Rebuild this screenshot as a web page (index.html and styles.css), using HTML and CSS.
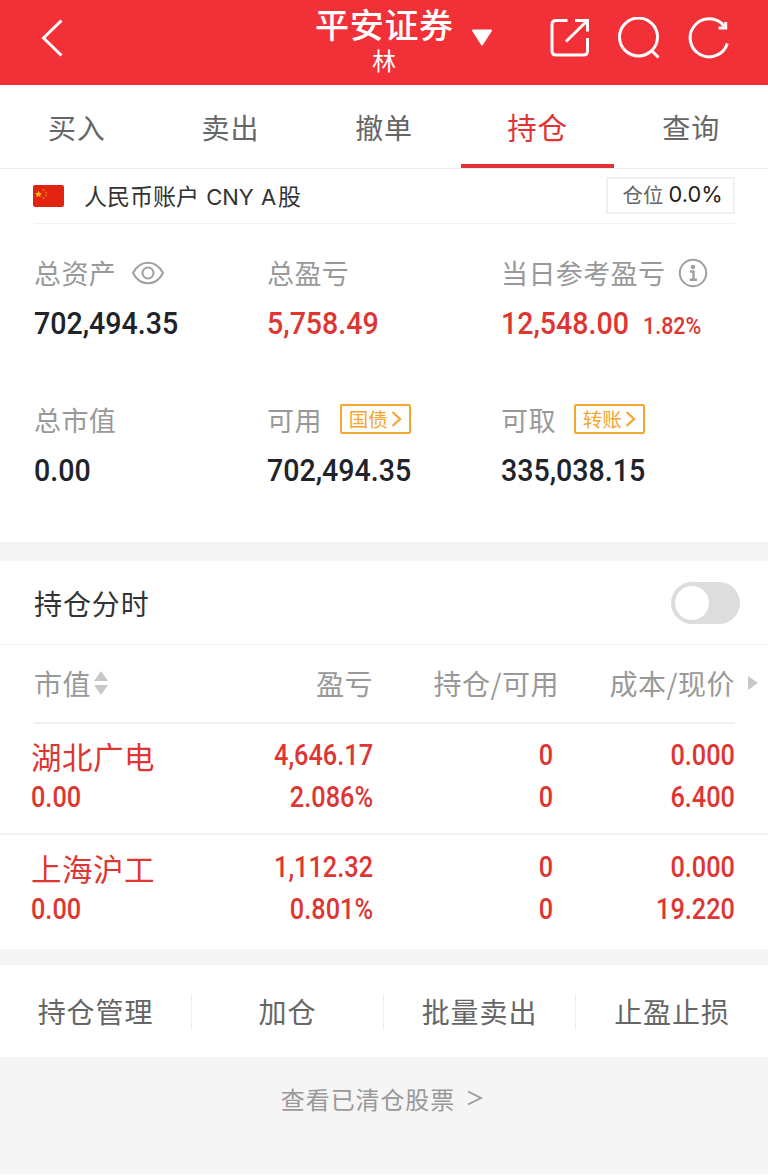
FILE: index.html
```html
<!DOCTYPE html>
<html lang="zh-CN">
<head>
<meta charset="utf-8">
<title>平安证券</title>
<link rel="stylesheet" href="styles.css">
</head>
<body>
<header class="header">
  <svg class="back" width="24" height="40" viewBox="0 0 24 40" fill="none" stroke="#fff" stroke-width="3"><path d="M20.500 2.500L2.500 20L20.500 37.500"/></svg>
  <div class="title-block">
    <h1 class="title">平安证券</h1>
    <div class="owner">林</div>
  </div>
  <svg class="caret" width="22" height="18" viewBox="0 0 22 18"><path d="M2 1.500H20L11 15.500Z" fill="#fff" stroke="#fff" stroke-width="2" stroke-linejoin="round"/></svg>
  <div class="tools">
    <svg width="42" height="42" viewBox="0 0 42 42" fill="none" stroke="#fff" stroke-width="3"><path d="M19.500 3.500H8Q4 3.500 4 7.500V34Q4 38 8 38H35.500Q39.500 38 39.500 34V21M27 3.500H39.500V14.500M39 4L18 24.500"/></svg>
    <svg width="46" height="42" viewBox="0 0 46 42" fill="none" stroke="#fff" stroke-width="3"><circle cx="21.500" cy="20" r="19"/><path d="M34 33L41.500 40.500"/></svg>
    <svg width="42" height="42" viewBox="0 0 42 42" fill="none" stroke="#fff" stroke-width="3"><path d="M39.300 26.500A19 19 0 1 1 36 9"/><path d="M37.700 5V11H30.500" stroke-width="3"/></svg>
  </div>
</header>

<nav class="tabs">
  <span class="tab">买入</span>
  <span class="tab">卖出</span>
  <span class="tab">撤单</span>
  <span class="tab tab-active">持仓</span>
  <span class="tab">查询</span>
</nav>

<section class="account">
  <svg class="flag" width="31" height="22" viewBox="0 0 31 22"><rect width="31" height="22" rx="2" fill="#e2230f"/><path d="M5.500 5.500L6.500 8L9 8.200L7.200 9.900L7.800 12.300L5.500 11L3.300 12.300L3.900 9.900L2 8.200L4.600 8Z" fill="#fcb913"/><g fill="#ef781a"><circle cx="10.500" cy="5" r="1"/><circle cx="13" cy="7.500" r="1"/><circle cx="13" cy="10.500" r="1"/><circle cx="10.500" cy="13" r="1"/></g></svg>
  <span class="account-name">人民币账户 <span class="latin">CNY</span> <span class="latin class-a">A</span>股</span>
  <span class="position">仓位<b>0.0%</b></span>
</section>

<section class="summary">
  <div class="metric">
    <div class="label">总资产<svg class="eye" width="34" height="28" viewBox="0 0 34 28" fill="none" stroke="#a0a0a0" stroke-width="2"><path d="M2 14C9 .3 25 .3 32 14C25 27.700 9 27.700 2 14Z"/><circle cx="17" cy="14" r="5.500"/></svg></div>
    <div class="value"><span class="num">702,494.35</span></div>
  </div>
  <div class="metric">
    <div class="label">总盈亏</div>
    <div class="value red"><span class="num">5,758.49</span></div>
  </div>
  <div class="metric">
    <div class="label">当日参考盈亏<svg class="info" width="30" height="30" viewBox="0 0 30 30" fill="none" stroke="#a0a0a0" stroke-width="2"><circle cx="15" cy="15" r="13.200"/><circle cx="15" cy="9" r="2.300" fill="#a0a0a0" stroke="none"/><path d="M12 13.500H15.500V21.500M11.800 21.800H19" stroke-width="2.400"/></svg></div>
    <div class="value red"><span class="num day">12,548.00</span><span class="num rate">1.82%</span></div>
  </div>
  <div class="metric">
    <div class="label">总市值</div>
    <div class="value"><span class="num">0.00</span></div>
  </div>
  <div class="metric">
    <div class="label">可用<span class="tag">国债<svg width="11" height="18" viewBox="0 0 11 18" fill="none" stroke="#f5a62f" stroke-width="2.200"><path d="M1.500 2L9 9L1.500 16"/></svg></span></div>
    <div class="value"><span class="num">702,494.35</span></div>
  </div>
  <div class="metric">
    <div class="label">可取<span class="tag">转账<svg width="11" height="18" viewBox="0 0 11 18" fill="none" stroke="#f5a62f" stroke-width="2.200"><path d="M1.500 2L9 9L1.500 16"/></svg></span></div>
    <div class="value"><span class="num">335,038.15</span></div>
  </div>
</section>

<section class="chart-row">
  <span>持仓分时</span>
  <span class="switch"><span class="knob"></span></span>
</section>

<section class="holdings">
  <div class="row head">
    <span class="c1">市值<svg width="14" height="24" viewBox="0 0 14 24" fill="#c8c8c8"><path d="M7 0L14 10H0ZM7 24L14 14H0Z"/></svg></span>
    <span class="c2">盈亏</span>
    <span class="c3">持仓/可用</span>
    <span class="c4">成本/现价</span>
    <svg class="more" width="10" height="14" viewBox="0 0 10 14"><path d="M0 0L10 7L0 14Z" fill="#c8c8c8"/></svg>
  </div>
  <div class="row stock">
    <div class="c1"><div class="name">湖北广电</div><div class="num">0.00</div></div>
    <div class="c2"><div class="num">4,646.17</div><div class="num">2.086%</div></div>
    <div class="c3"><div class="num">0</div><div class="num">0</div></div>
    <div class="c4"><div class="num">0.000</div><div class="num">6.400</div></div>
  </div>
  <div class="row stock">
    <div class="c1"><div class="name">上海沪工</div><div class="num">0.00</div></div>
    <div class="c2"><div class="num">1,112.32</div><div class="num">0.801%</div></div>
    <div class="c3"><div class="num">0</div><div class="num">0</div></div>
    <div class="c4"><div class="num">0.000</div><div class="num">19.220</div></div>
  </div>
</section>

<section class="actions">
  <span class="action">持仓管理</span>
  <span class="action">加仓</span>
  <span class="action">批量卖出</span>
  <span class="action">止盈止损</span>
</section>

<footer class="footer">查看已清仓股票<svg width="16" height="16" viewBox="0 0 16 16" fill="none" stroke="#999" stroke-width="1.800"><path d="M1 1.500L14 8L1 14.500"/></svg></footer>
</body>
</html>
```
FILE: styles.css
```css
* { box-sizing: border-box; }
html { background: #fff; }
body {
  margin: 0;
  width: 768px;
  height: 1174px;
  overflow: hidden;
  color: #666;
  font: 28px "Noto Sans CJK SC", sans-serif;
}
svg { display: block; flex: none; }

.header {
  height: 85px;
  background: #f23038;
  color: #fff;
  display: grid;
  grid-template-columns: 315px 138px 1fr auto;
  align-items: start;
}
.back { margin: 18px 0 0 41px; }
.title-block { text-align: center; }
.title { margin: 7px 0 0; font-size: 34px; font-weight: 500; line-height: 34px; letter-spacing: .7px; white-space: nowrap; }
.owner { margin-top: 7px; font-size: 24px; line-height: 24px; }
.caret { margin: 29px 0 0 18px; }
.tools { display: flex; padding: 17px 38px 0 0; gap: 25px; }
.tools svg:first-child { margin-right: 2px; }

.tabs { height: 84px; display: flex; background: #fff; border-bottom: 1px solid #eee; }
.tab { flex: 1; text-align: center; line-height: 84px; letter-spacing: .8px; height: 83px; }
.tab-active { color: #e03434; font-size: 29.500px; line-height: 83px; border-bottom: 4px solid #e03434; }

.account {
  height: 55px;
  display: flex;
  align-items: center;
  padding: 0 33px;
  background: #fff;
  position: relative;
}
.account::after { content: ""; position: absolute; left: 34px; right: 33px; bottom: 0; height: 1px; background: #f1f1f1; }
.flag { margin: 0 20px 2px 0; }
.account-name { color: #333; font-size: 23px; line-height: 52px; height: 55px; word-spacing: 2px; white-space: nowrap; }
.latin { font-family: Inter, sans-serif; font-size: 22px; }
.class-a { margin-right: 2px; }
.position {
  margin-left: auto;
  width: 129px;
  height: 37px;
  border: 2px solid #f0f0f3;
  font-size: 20.500px;
  line-height: 31px;
  display: flex;
  justify-content: center;
  gap: 5px;
  padding-left: 4px;
  margin-bottom: 2px;
}
.position b { font: 400 21.800px/31px Inter, sans-serif; color: #222; }

.summary {
  height: 318px;
  padding: 27px 0 0 34px;
  display: grid;
  grid-template-columns: 233px 234px 1fr;
  grid-template-rows: 147px 147px;
  background: #fff;
}
.label { height: 42px; display: flex; align-items: center; font-size: 27px; letter-spacing: .4px; color: #999; white-space: nowrap; }
.eye { margin: 1px 0 0 15px; }
.info { margin: 1px 0 0 13px; }
.value { height: 60px; line-height: 59px; color: #20232a; white-space: nowrap; }
.num { font-family: Roboto, sans-serif; font-weight: 500; }
.value .num { display: inline-block; font-size: 32px; transform: scaleX(.893); transform-origin: left; }
.value.red { color: #de3633; }
.value .rate { font-size: 24px; margin-left: -1px; }
.tag {
  display: flex;
  align-items: center;
  justify-content: center;
  gap: 3px;
  width: 71px;
  height: 30px;
  margin: -1px 0 0 18px;
  border: 2px solid #f5a62f;
  border-radius: 2px;
  color: #f5a62f;
  font-size: 19.500px;
  letter-spacing: 0;
}

.chart-row {
  height: 103px;
  border-top: 19px solid #f4f4f4;
  border-bottom: 1px solid #f3f3f3;
  background: #fff;
  color: #333;
  padding: 0 28px 0 34px;
  display: flex;
  align-items: center;
  justify-content: space-between;
  letter-spacing: .9px;
}
.switch { width: 69px; height: 42px; padding: 4px; border-radius: 21px; background: #ddd; }
.knob { display: block; width: 34px; height: 34px; border-radius: 50%; background: #fff; }

.holdings { background: #fff; height: 304px; }
.row { display: grid; grid-template-columns: 210px 132px 186px 176px 1fr; padding-left: 31px; }
.c2, .c3, .c4 { text-align: right; }
.head { height: 78px; align-items: center; padding-bottom: 2px; color: #999; letter-spacing: .5px; position: relative; }
.head::after { content: ""; position: absolute; left: 34px; right: 33px; bottom: -1px; height: 2px; background: #f0f0f0; }
.head .c1 { display: flex; align-items: center; gap: 3px; padding-left: 3px; }
.more { margin-left: 13px; margin-top: -1px; }
.stock { height: 112px; padding-top: 11px; border-bottom: 2px solid #f3f3f3; color: #de3633; }
.stock:last-child { border-bottom: 0; }
.stock .num, .name { height: 42px; line-height: 42px; }
.stock .num { font-size: 29px; transform: scaleX(.872); transform-origin: right; }
.stock .c1 .num { transform-origin: left; }
.name { font-size: 30.500px; letter-spacing: .5px; padding-top: 1px; }
.stock .c3 { padding-right: 6px; }

.actions { height: 108px; border-top: 16px solid #f5f5f5; background: #fff; display: flex; align-items: center; padding-top: 1px; }
.action { width: 192px; height: 36px; line-height: 35px; text-align: center; letter-spacing: .9px; border-right: 1px solid #eee; }
.action:last-child { border: 0; }

.footer { height: 117px; padding: 0 4px 35px 0; background: #f5f5f5; display: flex; align-items: center; justify-content: center; gap: 12px; color: #999; font-size: 24px; letter-spacing: .9px; }
```
